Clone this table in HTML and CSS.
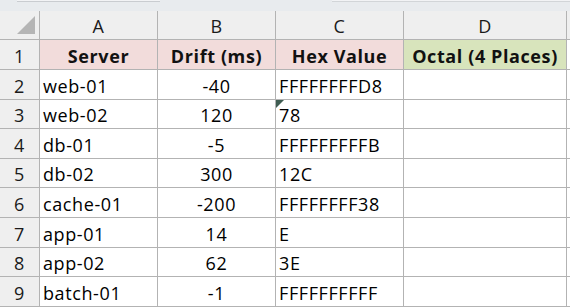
FILE: index.html
```html
<!DOCTYPE html>
<html>
<head>
<meta charset="utf-8">
<link rel="stylesheet" href="styles.css">
</head>
<body>
<div class="sheet">
  <div class="topbar"><div class="namebox"></div><div class="fxbox"></div></div>
  <div class="grid">
    <div class="corner"><svg width="39" height="28" viewBox="0 0 39 28"><polygon points="17,23 35,5 35,23" fill="#b5b5b5"/></svg></div>
    <div class="colhdr">A</div><div class="colhdr">B</div><div class="colhdr">C</div><div class="colhdr">D</div><div class="fill hdrfill"></div>

    <div class="rowhdr">1</div><div class="cell th pink">Server</div><div class="cell th pink">Drift (ms)</div><div class="cell th pink">Hex Value</div><div class="cell th green">Octal (4 Places)</div><div class="fill"></div>

    <div class="rowhdr">2</div><div class="cell">web-01</div><div class="cell num">-40</div><div class="cell">FFFFFFFFD8</div><div class="cell"></div><div class="fill"></div>
    <div class="rowhdr">3</div><div class="cell">web-02</div><div class="cell num">120</div><div class="cell flag">78</div><div class="cell"></div><div class="fill"></div>
    <div class="rowhdr">4</div><div class="cell">db-01</div><div class="cell num">-5</div><div class="cell">FFFFFFFFFB</div><div class="cell"></div><div class="fill"></div>
    <div class="rowhdr">5</div><div class="cell">db-02</div><div class="cell num">300</div><div class="cell">12C</div><div class="cell"></div><div class="fill"></div>
    <div class="rowhdr">6</div><div class="cell">cache-01</div><div class="cell num">-200</div><div class="cell">FFFFFFFF38</div><div class="cell"></div><div class="fill"></div>
    <div class="rowhdr">7</div><div class="cell">app-01</div><div class="cell num">14</div><div class="cell">E</div><div class="cell"></div><div class="fill"></div>
    <div class="rowhdr">8</div><div class="cell">app-02</div><div class="cell num">62</div><div class="cell">3E</div><div class="cell"></div><div class="fill"></div>
    <div class="rowhdr">9</div><div class="cell">batch-01</div><div class="cell num">-1</div><div class="cell">FFFFFFFFFF</div><div class="cell"></div><div class="fill"></div>
  </div>
</div>
</body>
</html>
```
FILE: styles.css
```css
html, body {
  margin: 0;
  padding: 0;
  background: #ffffff;
}
.sheet {
  width: 570px;
  height: 307px;
  overflow: hidden;
  font-family: "Open Sans", "Noto Sans", sans-serif;
  font-size: 18px;
  letter-spacing: 0.6px;
  color: #000;
}
.topbar {
  height: 11px;
  background: #e8ebee;
  display: flex;
}
.namebox {
  margin-left: 17px;
  width: 143px;
  height: 1px;
  background: #f2f3f5;
  border-bottom: 1px solid #c9ccd0;
}
.fxbox {
  margin-left: 172px;
  flex: 1;
  height: 1px;
  background: #f2f3f5;
  border-bottom: 1px solid #d2d5d8;
}
.grid {
  display: grid;
  grid-template-columns: 39px 117px 117px 127px 162px 1fr;
  grid-template-rows: 28px 29px 29px 28px 29px 28px 29px 29px 28px 29px;
  gap: 1px;
  padding-bottom: 1px;
  background: #b3b3b3;
}
.corner {
  background: #efefef;
  line-height: 0;
}
.colhdr, .rowhdr {
  background: #efefef;
  color: #1a1a1a;
  display: flex;
  align-items: flex-end;
  justify-content: center;
  line-height: 18px;
  padding-bottom: 4px;
  box-sizing: border-box;
}
.fill {
  background: #fff;
}
.hdrfill {
  background: #efefef;
}
.cell {
  background: #fff;
  display: flex;
  align-items: flex-end;
  line-height: 18px;
  padding: 0 3px 4px 3px;
  box-sizing: border-box;
  white-space: nowrap;
  overflow: hidden;
  position: relative;
}
.num {
  justify-content: center;
}
.th {
  font-weight: 700;
  justify-content: center;
  color: #111;
}
.pink {
  background: #f2dcdb;
}
.green {
  background: #d8e4bc;
}
.flag::before {
  content: "";
  position: absolute;
  left: 0;
  top: 0;
  border-top: 8px solid #3f5d52;
  border-right: 8px solid transparent;
}
```
